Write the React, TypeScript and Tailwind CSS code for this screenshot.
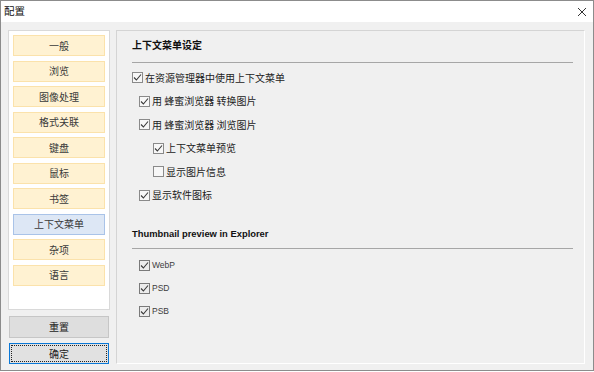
const cjk = { fontFamily: '"Noto Sans CJK SC", "Noto Sans", sans-serif' };
const latin = { fontFamily: '"Liberation Sans", Arial, sans-serif' };

const navItems = ["一般", "浏览", "图像处理", "格式关联", "键盘", "鼠标", "书签", "上下文菜单", "杂项", "语言"];

function CheckBox({ checked = true, dim = false }: { checked?: boolean; dim?: boolean }) {
  return (
    <span
      className={`flex h-[11px] w-[11px] shrink-0 items-center justify-center border ${
        dim ? "border-[#7a7a7a] bg-[#ececec]" : "border-[#8a8a8a] bg-[#f7f7f7]"
      }`}
    >
      {checked ? (
        <svg width="9" height="9" viewBox="0 0 9 9" aria-hidden>
          <polyline points="1,4.5 3.4,7 8,1.5" fill="none" stroke="#3a3a3a" strokeWidth="1.1" />
        </svg>
      ) : null}
    </span>
  );
}

function Row({
  indent,
  label,
  checked = true,
  latinText = false,
  h = "h-[23.5px]"
}: {
  indent: string;
  label: string;
  checked?: boolean;
  latinText?: boolean;
  h?: string;
}) {
  return (
    <div className={`flex items-center gap-[2px] ${h} ${indent}`}>
      <CheckBox checked={checked} dim={latinText} />
      {latinText ? (
        <span className="text-[8.5px] leading-none text-[#3c3c3c]" style={latin}>
          {label}
        </span>
      ) : (
        <span className="text-[10px] leading-none text-[#222]" style={cjk}>
          {label}
        </span>
      )}
    </div>
  );
}

export default function App() {
  return (
    <div className="flex h-[371px] w-[594px] flex-col border border-[#8c8c8c] bg-[#f0f0f0]">
      <div className="flex h-[21px] items-center justify-between bg-white pl-[3px] pr-[6px]">
        <span className="text-[10.5px] leading-none text-[#111]" style={cjk}>
          配置
        </span>
        <svg width="10" height="10" viewBox="0 0 10 10" aria-hidden>
          <path d="M1 1 L9 9 M9 1 L1 9" stroke="#333" strokeWidth="1" />
        </svg>
      </div>

      <div className="flex gap-[6px] pl-[7px] pt-[8px]">
        <div className="flex w-[102px] flex-col">
          <div className="flex h-[280px] flex-col gap-[4.5px] border border-[#d9d9d9] bg-white p-[4px]">
            {navItems.map((item) => {
              const active = item === "上下文菜单";
              return (
                <div
                  key={item}
                  className={`flex h-[21px] shrink-0 items-center justify-center border text-[10px] leading-none text-[#3a3a3a] ${
                    active ? "border-[#a9c3e8] bg-[#dde7f5]" : "border-[#fbe2ab] bg-[#fff2d2]"
                  }`}
                  style={cjk}
                >
                  {item}
                </div>
              );
            })}
          </div>
          <div
            className="mx-[1px] mt-[6px] flex h-[22px] items-center justify-center border border-[#c6c6c6] bg-[#dedede] text-[10px] leading-none text-[#222]"
            style={cjk}
          >
            重置
          </div>
          <div className="mx-[1px] mt-[5px] h-[21px] border border-[#0a78d7] bg-[#e1e1e1] p-[1px]">
            <div
              className="flex h-full items-center justify-center border border-dotted border-[#222] text-[10px] leading-none text-[#222]"
              style={cjk}
            >
              确定
            </div>
          </div>
        </div>

        <div className="flex h-[334px] w-[469px] flex-col border border-b-white border-l-[#d4d4d4] border-r-white border-t-[#d4d4d4] pl-[15px] pr-[11px] pt-[7px]">
          <div className="flex h-[14px] items-center text-[10px] font-bold leading-none text-[#111]" style={cjk}>
            上下文菜单设定
          </div>
          <div className="mt-[10px] h-px bg-[#a6a6a6]" />
          <div className="mt-[3px] flex flex-col">
            <Row indent="pl-0" label="在资源管理器中使用上下文菜单" />
            <Row indent="pl-[7px]" label="用 蜂蜜浏览器 转换图片" />
            <Row indent="pl-[7px]" label="用 蜂蜜浏览器 浏览图片" />
            <Row indent="pl-[21px]" label="上下文菜单预览" />
            <Row indent="pl-[21px]" label="显示图片信息" checked={false} />
            <Row indent="pl-[7px]" label="显示软件图标" />
          </div>
          <div className="mt-[20px] flex h-[14px] items-center text-[9.4px] font-bold leading-none text-[#111]" style={latin}>
            Thumbnail preview in Explorer
          </div>
          <div className="mt-[7px] h-px bg-[#a6a6a6]" />
          <div className="mt-[4.5px] flex flex-col">
            <Row indent="pl-[7px]" label="WebP" latinText h="h-[23px]" />
            <Row indent="pl-[7px]" label="PSD" latinText h="h-[23px]" />
            <Row indent="pl-[7px]" label="PSB" latinText h="h-[23px]" />
          </div>
        </div>
      </div>
    </div>
  );
}
